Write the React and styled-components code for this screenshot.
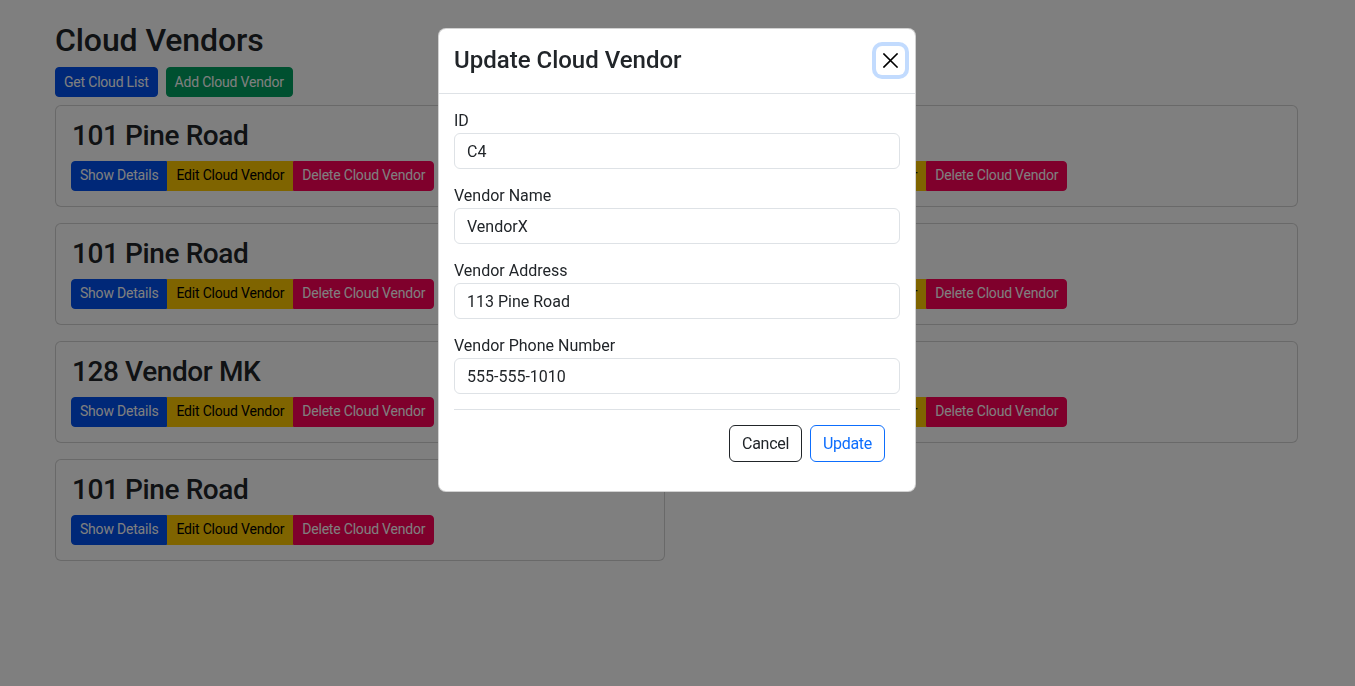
import { useState } from "react";
import styled, { createGlobalStyle, css } from "styled-components";

const GlobalStyle = createGlobalStyle`
  * {
    box-sizing: border-box;
  }

  body {
    margin: 0;
    background: #ffffff;
    color: #212529;
    font-family: Roboto, "Liberation Sans", Arial, sans-serif;
    font-size: 16px;
    line-height: 1.5;
  }
`;

const colors = {
  primary: "#0d6efd",
  success: "#00a060",
  warning: "#ffc800",
  danger: "#ff0058",
  group: "#0050f0",
};

const vendors = [
  { id: "C1", title: "101 Pine Road" },
  { id: "C2", title: "113 Pine Road" },
  { id: "C3", title: "101 Pine Road" },
  { id: "C5", title: "102 Oak Street" },
  { id: "C6", title: "128 Vendor MK" },
  { id: "C7", title: "140 Vendor QA" },
  { id: "C8", title: "101 Pine Road" },
];

const fields = [
  { key: "id", label: "ID" },
  { key: "name", label: "Vendor Name" },
  { key: "address", label: "Vendor Address" },
  { key: "phone", label: "Vendor Phone Number" },
];

const App = () => {
  const [vendor, setVendor] = useState({
    id: "C4",
    name: "VendorX",
    address: "113 Pine Road",
    phone: "555-555-1010",
  });

  const updateField = (key) => (event) => {
    setVendor({ ...vendor, [key]: event.target.value });
  };

  return (
    <>
      <GlobalStyle />
      <Page>
        <Heading>Cloud Vendors</Heading>
        <Toolbar>
          <ActionButton $variant="group">Get Cloud List</ActionButton>
          <ActionButton $variant="success">Add Cloud Vendor</ActionButton>
        </Toolbar>
        <VendorGrid>
          {vendors.map((item) => (
            <VendorCard key={item.id}>
              <CardTitle>{item.title}</CardTitle>
              <ButtonGroup>
                <GroupButton $variant="group">Show Details</GroupButton>
                <GroupButton $variant="warning">Edit Cloud Vendor</GroupButton>
                <GroupButton $variant="danger">Delete Cloud Vendor</GroupButton>
              </ButtonGroup>
            </VendorCard>
          ))}
        </VendorGrid>
      </Page>

      <Backdrop>
        <Dialog>
          <DialogHeader>
            <DialogTitle>Update Cloud Vendor</DialogTitle>
            <CloseButton aria-label="Close">
              <svg width="15" height="15" viewBox="0 0 15 15">
                <path
                  d="M1 1 L14 14 M14 1 L1 14"
                  stroke="#000"
                  strokeWidth="1.6"
                  strokeLinecap="square"
                />
              </svg>
            </CloseButton>
          </DialogHeader>
          <DialogBody>
            <form>
              {fields.map((field) => (
                <Field key={field.key}>
                  <FieldLabel>{field.label}</FieldLabel>
                  <FieldInput
                    type="text"
                    value={vendor[field.key]}
                    onChange={updateField(field.key)}
                  />
                </Field>
              ))}
              <DialogFooter>
                <OutlineButton type="button" $tone="dark">
                  Cancel
                </OutlineButton>
                <OutlineButton type="button" $tone="primary">
                  Update
                </OutlineButton>
              </DialogFooter>
            </form>
          </DialogBody>
        </Dialog>
      </Backdrop>
    </>
  );
};

const Page = styled.main`
  padding: 21px 57px 40px 55px;
`;

const Heading = styled.h2`
  margin: 0 0 8px;
  font-size: 32px;
  font-weight: 500;
  line-height: 1.2;
  letter-spacing: -0.1px;
`;

const Toolbar = styled.div`
  display: flex;
  gap: 8px;
`;

const smallButton = css`
  height: 30px;
  padding: 0 8px;
  border: 1px solid ${(p) => colors[p.$variant]};
  background: ${(p) => colors[p.$variant]};
  color: ${(p) => (p.$variant === "warning" ? "#000000" : "#ffffff")};
  font-family: inherit;
  font-size: 14px;
  line-height: 1.5;
  letter-spacing: -0.2px;
  cursor: pointer;
`;

const ActionButton = styled.button`
  ${smallButton}
  border-radius: 4px;
`;

const VendorGrid = styled.div`
  display: grid;
  grid-template-columns: 1fr 1fr;
  column-gap: 23px;
  row-gap: 16px;
  margin-top: 8px;
`;

const VendorCard = styled.div`
  height: 102px;
  padding: 13px 16px 15px 15px;
  border: 1px solid rgba(0, 0, 0, 0.175);
  border-radius: 6px;
  background: #ffffff;
`;

const CardTitle = styled.h3`
  margin: 0 0 8px 1px;
  font-size: 28px;
  font-weight: 500;
  line-height: 1.2;
  letter-spacing: -0.4px;
`;

const ButtonGroup = styled.div`
  display: inline-flex;
`;

const GroupButton = styled.button`
  ${smallButton}
  border-radius: 0;

  &:first-child {
    border-radius: 4px 0 0 4px;
  }

  &:last-child {
    border-radius: 0 4px 4px 0;
  }
`;

const Backdrop = styled.div`
  position: fixed;
  inset: 0;
  display: flex;
  justify-content: center;
  align-items: flex-start;
  padding: 28px 1px 0 0;
  background: rgba(0, 0, 0, 0.5);
`;

const Dialog = styled.div`
  width: 478px;
  background: #ffffff;
  border: 1px solid rgba(0, 0, 0, 0.175);
  border-radius: 8px;
`;

const DialogHeader = styled.div`
  display: flex;
  align-items: center;
  justify-content: space-between;
  height: 65px;
  padding: 0 6px 2px 15px;
  border-bottom: 1px solid #dee2e6;
`;

const DialogTitle = styled.h4`
  margin: 0;
  font-size: 24px;
  font-weight: 500;
  line-height: 1.2;
`;

const CloseButton = styled.button`
  display: flex;
  align-items: center;
  justify-content: center;
  width: 29px;
  height: 29px;
  margin-right: 4px;
  padding: 0;
  border: 0;
  border-radius: 6px;
  background: transparent;
  box-shadow: 0 0 0 4px rgba(13, 110, 253, 0.25);
  cursor: pointer;
`;

const DialogBody = styled.div`
  padding: 15px 15px 14px;
`;

const Field = styled.div`
  margin-bottom: 15px;
`;

const FieldLabel = styled.label`
  display: block;
  font-size: 16px;
  line-height: 24px;
`;

const FieldInput = styled.input`
  display: block;
  width: 100%;
  height: 36px;
  padding: 0 12px;
  border: 1px solid #dee2e6;
  border-radius: 6px;
  background: #ffffff;
  color: #212529;
  font-family: inherit;
  font-size: 16px;
  outline: none;
`;

const DialogFooter = styled.div`
  display: flex;
  justify-content: flex-end;
  gap: 8px;
  padding: 15px 15px 15px 12px;
  border-top: 1px solid #dee2e6;
`;

const OutlineButton = styled.button`
  height: 37px;
  padding: 0 12px;
  border: 1px solid ${(p) => (p.$tone === "primary" ? colors.primary : "#212529")};
  border-radius: 6px;
  background: transparent;
  color: ${(p) => (p.$tone === "primary" ? colors.primary : "#212529")};
  font-family: inherit;
  font-size: 16px;
  line-height: 1.5;
  letter-spacing: -0.3px;
  cursor: pointer;
`;

export default App;
